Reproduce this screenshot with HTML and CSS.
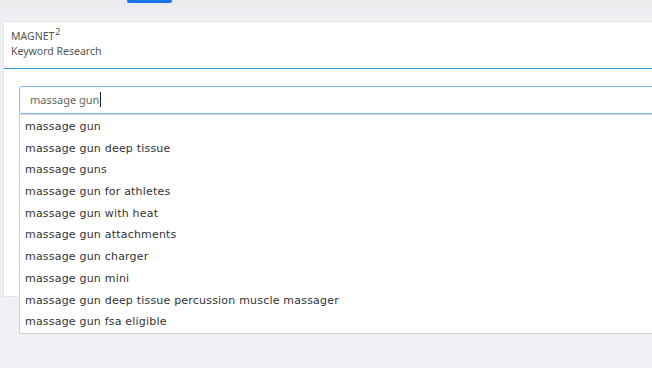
FILE: index.html
```html
<!doctype html>
<html lang="en">
<head>
  <meta charset="utf-8">
  <title>Magnet2 Keyword Research</title>
  <link rel="stylesheet" href="styles.css">
</head>
<body>

<div class="topbar">
  <div class="tab"></div>
</div>

<div class="card">
  <div class="card-header">
    <div class="brand">MAGNET<sup>2</sup></div>
    <div class="subtitle">Keyword Research</div>
  </div>

  <div class="card-body">
    <div class="search">
      <div class="search-input">massage gun<span class="caret"></span></div>

      <ul class="suggestions">
        <li>massage gun</li>
        <li>massage gun deep tissue</li>
        <li>massage guns</li>
        <li>massage gun for athletes</li>
        <li>massage gun with heat</li>
        <li>massage gun attachments</li>
        <li>massage gun charger</li>
        <li>massage gun mini</li>
        <li>massage gun deep tissue percussion muscle massager</li>
        <li>massage gun fsa eligible</li>
      </ul>
    </div>
  </div>
</div>

</body>
</html>
```

FILE: styles.css
```css
html, body {
  margin: 0;
  padding: 0;
}

body {
  width: 652px;
  height: 368px;
  overflow: hidden;
  background: #f0f1f5;
  font-family: "Noto Sans", "Open Sans", Arial, sans-serif;
}

.topbar {
  height: 21px;
  background: linear-gradient(#e8e9eb, #f0f1f4);
}

.tab {
  margin-left: 127px;
  width: 45px;
  height: 3px;
  background: #1a73e8;
  border-radius: 0 0 2px 2px;
}

.card {
  width: 720px;
  margin-left: 3px;
  height: 274px;
  background: #ffffff;
  border: 1px solid #e3e4e7;
  overflow: visible;
}

.card-header {
  box-sizing: border-box;
  height: 47px;
  padding: 7px 7px 0;
  border-bottom: 1px solid #2f98df;
  color: #555;
  font-size: 10.5px;
  line-height: 15px;
}

.brand sup {
  font-size: 9px;
  line-height: 0;
  vertical-align: 5px;
  margin-left: 1px;
}

.card-body {
  padding: 17px 0 0 15px;
}

.search {
  position: relative;
}

.search-input {
  height: 28px;
  box-sizing: border-box;
  border: 1px solid #80bdff;
  border-radius: 3px;
  padding: 0 10px;
  font-size: 11px;
  line-height: 25px;
  color: #666;
}

.caret {
  display: inline-block;
  width: 1px;
  height: 15px;
  background: #222;
  vertical-align: -3px;
  margin-left: 1px;
}

.suggestions {
  position: absolute;
  left: 0;
  top: 28px;
  width: 700px;
  margin: 0;
  padding: 1px 0 0;
  list-style: none;
  background: #ffffff;
  border: 1px solid #cfd0d2;
  font-family: "DejaVu Sans", Verdana, sans-serif;
  font-size: 11px;
  color: #333;
}

.suggestions li {
  height: 21.7px;
  line-height: 21.7px;
  padding-left: 5px;
  letter-spacing: 0.2px;
}
```
